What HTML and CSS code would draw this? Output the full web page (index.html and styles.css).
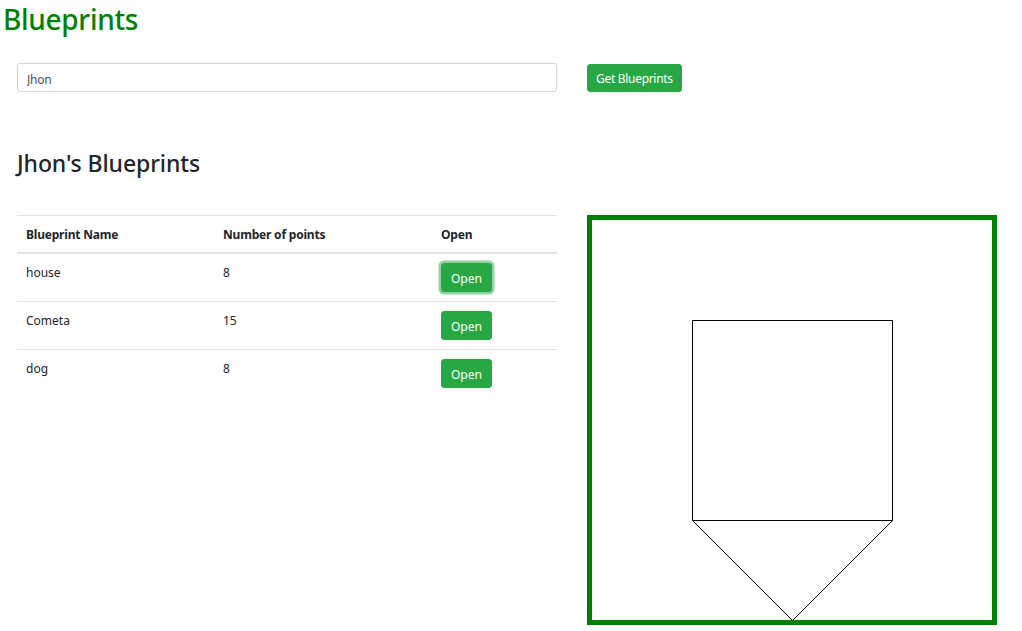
FILE: index.html
```html
<!DOCTYPE html>
<html lang="en">
<head>
<meta charset="utf-8">
<title>Blueprints</title>
<link rel="stylesheet" href="styles.css">
</head>
<body>
<h1 class="title">Blueprints</h1>
<div class="search">
  <input class="field" type="text" value="Jhon">
  <button class="btn btn-get">Get Blueprints</button>
</div>
<h2 class="author">Jhon's Blueprints</h2>
<div class="main">
  <table class="bp-table">
    <thead>
      <tr><th class="c1">Blueprint Name</th><th class="c2">Number of points</th><th class="c3">Open</th></tr>
    </thead>
    <tbody>
      <tr><td>house</td><td>8</td><td><button class="btn btn-open focus">Open</button></td></tr>
      <tr><td>Cometa</td><td>15</td><td><button class="btn btn-open">Open</button></td></tr>
      <tr><td>dog</td><td>8</td><td><button class="btn btn-open">Open</button></td></tr>
    </tbody>
  </table>
  <div class="canvas">
    <svg width="400" height="400" viewBox="0 0 400 400">
      <polyline points="100.5,100.5 300.5,100.5 300.5,300.5 100.5,300.5 100.5,100.5" fill="none" stroke="#000" stroke-width="1"/>
      <polyline points="100.5,300.5 200.5,400.5 300.5,300.5" fill="none" stroke="#000" stroke-width="1"/>
    </svg>
  </div>
</div>
</body>
</html>
```
FILE: styles.css
```css
* { box-sizing: border-box; }
body {
  margin: 0;
  font-family: "Noto Sans", "Open Sans", sans-serif;
  font-size: 12px;
  line-height: 18px;
  color: #212529;
  background: #fff;
}
.title {
  margin: 0 0 0 3px;
  padding-top: 2px;
  font-size: 28px;
  line-height: 34px;
  font-weight: 500;
  letter-spacing: -0.3px;
  color: #008000;
}
.search {
  display: flex;
  align-items: center;
  margin: 27px 0 0 17px;
  gap: 30px;
}
.field {
  width: 540px;
  height: 29px;
  padding: 6px 9px 3px;
  border: 1px solid #ced4da;
  border-radius: 3px;
  font-family: inherit;
  font-size: 12px;
  letter-spacing: -0.2px;
  color: #495057;
  outline: none;
}
.btn {
  height: 29px;
  padding: 6px 8px 3px;
  border: 1px solid #28a745;
  border-radius: 3px;
  background: #28a745;
  color: #fff;
  font-family: inherit;
  font-size: 12px;
  line-height: 18px;
  letter-spacing: -0.3px;
}
.btn-get {
  height: 28px;
  padding-top: 5px;
  margin-top: 1px;
}
.btn-open {
  letter-spacing: 0;
  padding-left: 9px;
  padding-right: 9px;
}
.btn.focus {
  box-shadow: 0 0 0 2.5px rgba(40, 167, 69, 0.5);
}
.author {
  margin: 57px 0 0 17px;
  font-size: 23px;
  line-height: 29px;
  font-weight: 500;
  letter-spacing: -0.1px;
}
.main {
  display: flex;
  align-items: flex-start;
  margin: 37px 0 0 17px;
  gap: 30px;
}
.bp-table {
  width: 540px;
  border-collapse: collapse;
}
.bp-table th, .bp-table td {
  padding: 10px 9px 8px;
  text-align: left;
  vertical-align: top;
  border-top: 1px solid #dee2e6;
  font-size: 12px;
  line-height: 18px;
}
.bp-table td { padding: 9px; }
.bp-table td:not(:last-child) { padding-top: 10px; }
.bp-table th {
  font-weight: 700;
  border-bottom: 2px solid #dee2e6;
  letter-spacing: -0.2px;
}
.c1 { width: 197px; }
.c2 { width: 218px; }
.c3 { width: 125px; }
.canvas {
  border: 5px solid #008000;
  width: 410px;
  height: 410px;
}
.canvas svg { display: block; }
```
